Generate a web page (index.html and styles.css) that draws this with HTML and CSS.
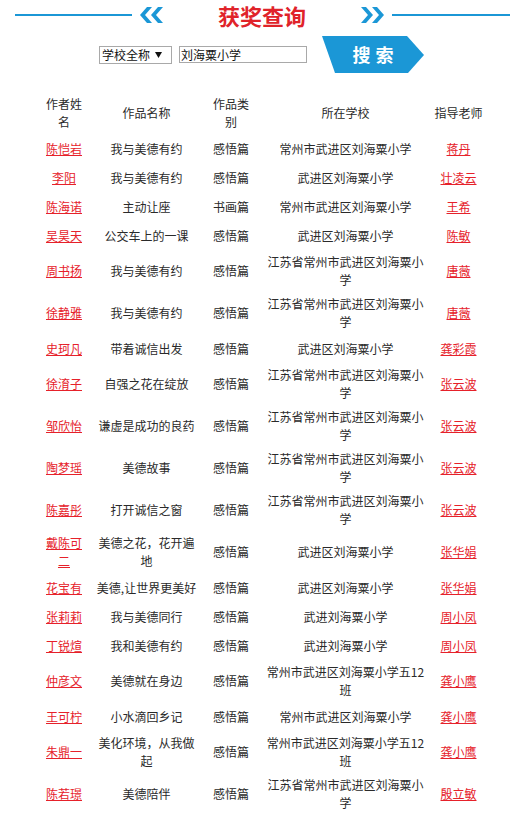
FILE: index.html
```html
<!DOCTYPE html>
<html lang="zh-CN">
<head>
<meta charset="utf-8">
<title>获奖查询</title>
<link rel="stylesheet" href="styles.css">
</head>
<body>
<div class="page">
  <div class="title-bar">
    <span class="line line-left"></span>
    <svg class="chev" viewBox="0 0 24 16" aria-hidden="true"><polygon points="7,0 12,0 5,8 12,16 7,16 0,8"/><polygon points="18,0 23,0 16,8 23,16 18,16 11,8"/></svg>
    <h1 class="title">获奖查询</h1>
    <svg class="chev" viewBox="0 0 24 16" aria-hidden="true"><polygon points="1,0 6,0 13,8 6,16 1,16 8,8"/><polygon points="12,0 17,0 24,8 17,16 12,16 19,8"/></svg>
    <span class="line line-right"></span>
  </div>

  <form class="search">
    <span class="select-wrap">
      <select class="select"><option>学校全称</option></select>
      <svg class="caret" viewBox="0 0 7 6" aria-hidden="true"><polygon points="0,0 7,0 3.5,6"/></svg>
    </span>
    <input class="keyword" type="text" value="刘海粟小学">
    <button class="btn" type="button">搜索</button>
  </form>

  <table class="awards">
    <colgroup>
      <col class="c-name"><col class="c-work"><col class="c-type"><col class="c-school"><col class="c-teacher">
    </colgroup>
    <thead>
      <tr><th>作者姓名</th><th>作品名称</th><th>作品类别</th><th>所在学校</th><th>指导老师</th></tr>
    </thead>
    <tbody>
      <tr><td><a href="#">陈恺岩</a></td><td>我与美德有约</td><td>感悟篇</td><td>常州市武进区刘海粟小学</td><td><a href="#">蒋丹</a></td></tr>
      <tr><td><a href="#">李阳</a></td><td>我与美德有约</td><td>感悟篇</td><td>武进区刘海粟小学</td><td><a href="#">壮凌云</a></td></tr>
      <tr><td><a href="#">陈海诺</a></td><td>主动让座</td><td>书画篇</td><td>常州市武进区刘海粟小学</td><td><a href="#">王希</a></td></tr>
      <tr><td><a href="#">吴昊天</a></td><td>公交车上的一课</td><td>感悟篇</td><td>武进区刘海粟小学</td><td><a href="#">陈敏</a></td></tr>
      <tr><td><a href="#">周书扬</a></td><td>我与美德有约</td><td>感悟篇</td><td>江苏省常州市武进区刘海粟小学</td><td><a href="#">唐薇</a></td></tr>
      <tr><td><a href="#">徐静雅</a></td><td>我与美德有约</td><td>感悟篇</td><td>江苏省常州市武进区刘海粟小学</td><td><a href="#">唐薇</a></td></tr>
      <tr><td><a href="#">史珂凡</a></td><td>带着诚信出发</td><td>感悟篇</td><td>武进区刘海粟小学</td><td><a href="#">龚彩霞</a></td></tr>
      <tr><td><a href="#">徐淯子</a></td><td>自强之花在绽放</td><td>感悟篇</td><td>江苏省常州市武进区刘海粟小学</td><td><a href="#">张云波</a></td></tr>
      <tr><td><a href="#">邹欣怡</a></td><td>谦虚是成功的良药</td><td>感悟篇</td><td>江苏省常州市武进区刘海粟小学</td><td><a href="#">张云波</a></td></tr>
      <tr><td><a href="#">陶梦瑶</a></td><td>美德故事</td><td>感悟篇</td><td>江苏省常州市武进区刘海粟小学</td><td><a href="#">张云波</a></td></tr>
      <tr><td><a href="#">陈嘉彤</a></td><td>打开诚信之窗</td><td>感悟篇</td><td>江苏省常州市武进区刘海粟小学</td><td><a href="#">张云波</a></td></tr>
      <tr><td><a href="#">戴陈可二</a></td><td>美德之花，花开遍地</td><td>感悟篇</td><td>武进区刘海粟小学</td><td><a href="#">张华娟</a></td></tr>
      <tr><td><a href="#">花宝有</a></td><td>美德,让世界更美好</td><td>感悟篇</td><td>武进区刘海粟小学</td><td><a href="#">张华娟</a></td></tr>
      <tr><td><a href="#">张莉莉</a></td><td>我与美德同行</td><td>感悟篇</td><td>武进刘海粟小学</td><td><a href="#">周小凤</a></td></tr>
      <tr><td><a href="#">丁锐煊</a></td><td>我和美德有约</td><td>感悟篇</td><td>武进刘海粟小学</td><td><a href="#">周小凤</a></td></tr>
      <tr><td><a href="#">仲彦文</a></td><td>美德就在身边</td><td>感悟篇</td><td>常州市武进区刘海粟小学五12班</td><td><a href="#">龚小鹰</a></td></tr>
      <tr><td><a href="#">王可柠</a></td><td>小水滴回乡记</td><td>感悟篇</td><td>常州市武进区刘海粟小学</td><td><a href="#">龚小鹰</a></td></tr>
      <tr><td><a href="#">朱鼎一</a></td><td>美化环境，从我做起</td><td>感悟篇</td><td>常州市武进区刘海粟小学五12班</td><td><a href="#">龚小鹰</a></td></tr>
      <tr><td><a href="#">陈若璟</a></td><td>美德陪伴</td><td>感悟篇</td><td>江苏省常州市武进区刘海粟小学</td><td><a href="#">殷立敏</a></td></tr>
    </tbody>
  </table>
</div>
</body>
</html>
```

FILE: styles.css
```css
body {
  margin: 0;
  background: #fff;
  color: #2a2a2a;
  font-family: "Noto Sans CJK SC", "Microsoft YaHei", sans-serif;
}

.page {
  width: 518px;
}

/* ---------- title bar ---------- */
.title-bar {
  display: flex;
  align-items: center;
  height: 30px;
}

.line {
  display: block;
  height: 2px;
  background: #1b97d6;
}

.line-left {
  width: 117px;
  margin-left: 15px;
  margin-right: 8px;
}

.line-right {
  width: 118px;
  margin-left: 8px;
}

.chev {
  display: block;
  width: 24px;
  height: 16px;
  fill: #1b97d6;
}

.title {
  margin: 0 54px;
  width: 88px;
  font-size: 22px;
  line-height: 26px;
  font-weight: bold;
  color: #e0232a;
  white-space: nowrap;
}

/* ---------- search ---------- */
.search {
  display: flex;
  align-items: center;
  height: 37px;
  margin: 6px 0 0;
  padding-left: 99px;
}

.select-wrap {
  position: relative;
  display: block;
  width: 73px;
  height: 18px;
}

.select {
  -webkit-appearance: none;
  appearance: none;
  display: block;
  width: 73px;
  height: 18px;
  margin: 0;
  padding: 0 0 0 2px;
  box-sizing: border-box;
  border: 1px solid #a9a9a9;
  border-radius: 0;
  background: #fff;
  color: #111;
  font-family: inherit;
  font-size: 12px;
  line-height: 16px;
}

.caret {
  position: absolute;
  right: 10px;
  top: 6px;
  width: 7px;
  height: 6px;
  fill: #111;
}

.keyword {
  display: block;
  width: 128px;
  height: 17px;
  margin: 0 0 0 7px;
  padding: 0 1px;
  box-sizing: border-box;
  border: 1px solid #a9a9a9;
  border-radius: 0;
  color: #111;
  font-family: inherit;
  font-size: 12px;
  line-height: 15px;
}

.btn {
  display: block;
  width: 103px;
  height: 37px;
  margin: 0 0 0 15px;
  padding: 0 0 0 4px;
  border: 0;
  background: #1b97d6;
  clip-path: polygon(0 0, 85px 0, 102px 19px, 86px 37px, 13px 37px);
  color: #fff;
  font-family: inherit;
  font-size: 18px;
  font-weight: bold;
  letter-spacing: 5px;
  text-align: center;
  line-height: 37px;
  cursor: pointer;
}

/* ---------- table ---------- */
.awards {
  width: 447px;
  margin: 19px 0 0 38px;
  border-collapse: collapse;
  table-layout: fixed;
  font-size: 12px;
  line-height: 18px;
  text-align: center;
}

.c-name { width: 52px; }
.c-work { width: 113px; }
.c-type { width: 56px; }
.c-school { width: 173px; }
.c-teacher { width: 53px; }

.awards th,
.awards td {
  padding: 3px 4px;
  font-weight: normal;
  vertical-align: middle;
}

.awards th:nth-child(3),
.awards td:nth-child(3) {
  padding-left: 6px;
  padding-right: 6px;
}

.awards th:nth-child(4),
.awards td:nth-child(4) {
  padding-left: 6px;
  padding-right: 6px;
}

.awards th:nth-child(5),
.awards td:nth-child(5) {
  padding-left: 2px;
  padding-right: 2px;
}

.awards tbody tr {
  height: 29px;
}

.awards a {
  color: #e6212a;
  text-decoration: underline;
}
```
